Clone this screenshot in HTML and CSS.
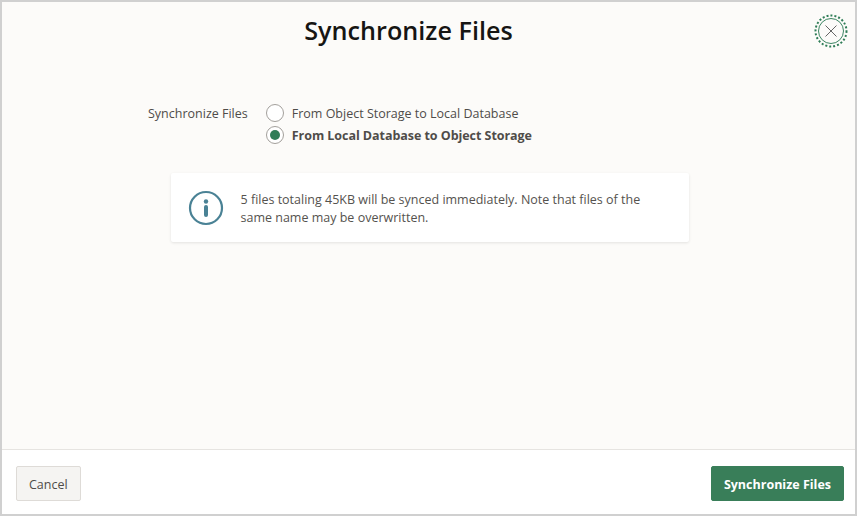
FILE: index.html
```html
<!DOCTYPE html>
<html lang="en">
<head>
  <meta charset="UTF-8" />
  <meta name="viewport" content="width=device-width, initial-scale=1.0"/>
  <title>Synchronize Files</title>
  <link rel="stylesheet" href="styles.css">
</head>
<body>
  <div class="dialog">
    <div class="dialog-body">
      <div class="top-bar">
        <h1>Synchronize Files</h1>
        <button class="close" aria-label="Close">
          <svg width="34" height="34" viewBox="0 0 34 34">
            <circle cx="17" cy="17" r="15.5" fill="none" stroke="#2f7d57" stroke-width="2" stroke-dasharray="2 2"/>
            <circle cx="17" cy="17" r="12.5" fill="none" stroke="#3c8562" stroke-width="1"/>
            <path d="M11.5 11.5 L22.5 22.5 M22.5 11.5 L11.5 22.5" fill="none" stroke="#666" stroke-width="1"/>
          </svg>
        </button>
      </div>

      <div class="field">
        <span class="field-label">Synchronize Files</span>
        <div class="options">
          <label class="option"><span class="radio"></span>From Object Storage to Local Database</label>
          <label class="option selected"><span class="radio"></span><span class="selected-text">From Local Database to Object Storage</span></label>
        </div>
      </div>

      <div class="notice">
        <svg class="notice-icon" width="36" height="36" viewBox="0 0 36 36">
          <circle cx="18" cy="18" r="16" fill="none" stroke="#4a8295" stroke-width="2.2"/>
          <circle cx="18" cy="11.5" r="2.2" fill="#4a8295"/>
          <path d="M18 17 V25" fill="none" stroke="#4a8295" stroke-width="4" stroke-linecap="round"/>
        </svg>
        <p>5 files totaling 45KB will be synced immediately. Note that files of the same name may be overwritten.</p>
      </div>
    </div>

    <div class="footer">
      <button class="btn">Cancel</button>
      <button class="btn primary">Synchronize Files</button>
    </div>
  </div>
</body>
</html>
```

FILE: styles.css
```css
* { box-sizing: border-box; font-family: "Open Sans", "Noto Sans", sans-serif; }
body {
  margin: 0;
  width: 857px;
  height: 516px;
  overflow: hidden;
}
.dialog {
  width: 100%;
  height: 100%;
  border: 2px solid #d0d0d0;
  display: flex;
  flex-direction: column;
  background: #fff;
}
.dialog-body {
  flex: 1;
  background: #fcfbf9;
  display: flex;
  flex-direction: column;
  align-items: center;
}
.top-bar {
  width: 100%;
  height: 58px;
  padding-right: 40px;
  display: flex;
  justify-content: center;
  position: relative;
}
h1 {
  margin: 11px 0 0;
  font-size: 25.2px;
  line-height: 34px;
  font-weight: 600;
  color: #161513;
}
.close {
  position: absolute;
  top: 12px;
  right: 7px;
  width: 34px;
  height: 34px;
  padding: 0;
  border: none;
  background: none;
  display: flex;
}
.field {
  width: 100%;
  margin-top: 42px;
  padding-left: 146px;
  display: flex;
  gap: 18px;
  font-size: 12.5px;
  color: #4f4c49;
}
.field-label { line-height: 23px; }
.options {
  display: flex;
  flex-direction: column;
}
.option {
  height: 22px;
  display: flex;
  align-items: center;
  gap: 8px;
}
.selected-text {
  font-weight: 700;
  letter-spacing: -0.05px;
}
.radio {
  width: 18px;
  height: 18px;
  border: 1px solid #a3a09c;
  border-radius: 50%;
  background: #fff;
  display: flex;
  align-items: center;
  justify-content: center;
}
.selected .radio::after {
  content: "";
  width: 10px;
  height: 10px;
  border-radius: 50%;
  background: #2f7d57;
}
.notice {
  width: 518px;
  height: 69px;
  margin-top: 27px;
  margin-left: 2px;
  padding: 0 28px 0 17px;
  background: #fff;
  border-radius: 2px;
  box-shadow: 0 1px 3px rgba(0,0,0,0.1);
  display: flex;
  align-items: center;
  gap: 17px;
}
.notice-icon { flex: none; }
.notice p {
  margin: 0;
  padding-top: 2px;
  font-size: 12.5px;
  line-height: 18px;
  color: #55524e;
}
.footer {
  height: 65px;
  padding: 16px 11px 0 14px;
  border-top: 1px solid #e6e4e1;
  background: #fff;
  display: flex;
  justify-content: space-between;
  align-items: flex-start;
}
.btn {
  height: 35px;
  padding: 1px 12px 0;
  font-size: 12.5px;
  border: 1px solid #dedbd7;
  border-radius: 2px;
  background: #f5f4f2;
  color: #4f4c49;
}
.primary {
  font-weight: 700;
  border-color: #397e59;
  background: #397e59;
  color: #fff;
}
```
